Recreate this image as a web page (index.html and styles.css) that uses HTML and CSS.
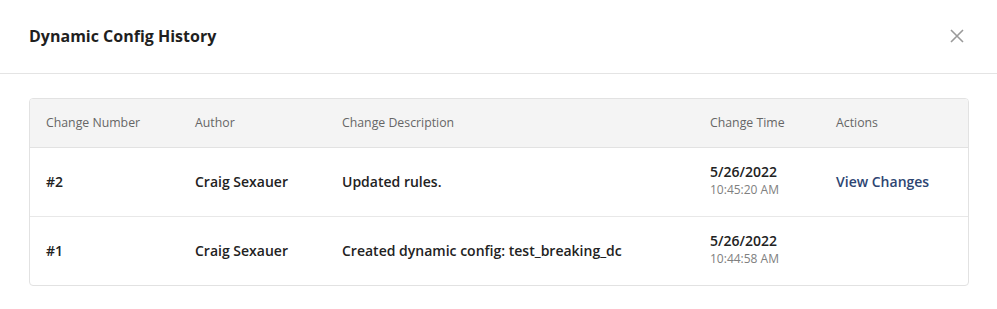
FILE: index.html
```html
<!DOCTYPE html>
<html lang="en">
<head>
  <meta charset="UTF-8" />
  <title>Dynamic Config History</title>
  <link rel="stylesheet" href="styles.css">
</head>
<body>
  <div class="modal">
    <div class="modal-header">
      <h2>Dynamic Config History</h2>
      <button class="modal-close" aria-label="Close">
        <svg width="14" height="14" viewBox="0 0 14 14"><path d="M1 1L13 13M13 1L1 13" stroke="#9a9a9a" stroke-width="1.6" fill="none"/></svg>
      </button>
    </div>

    <div class="modal-body">
      <div class="history-card">
        <table class="history-table">
          <thead>
            <tr>
              <th class="col-num">Change Number</th>
              <th class="col-author">Author</th>
              <th class="col-desc">Change Description</th>
              <th class="col-time">Change Time</th>
              <th>Actions</th>
            </tr>
          </thead>
          <tbody>
            <tr>
              <td>#2</td>
              <td>Craig Sexauer</td>
              <td>Updated rules.</td>
              <td>
                <div class="date">5/26/2022</div>
                <div class="time">10:45:20 AM</div>
              </td>
              <td><a href="#" class="view-link">View Changes</a></td>
            </tr>
            <tr>
              <td>#1</td>
              <td>Craig Sexauer</td>
              <td>Created dynamic config: test_breaking_dc</td>
              <td>
                <div class="date">5/26/2022</div>
                <div class="time">10:44:58 AM</div>
              </td>
              <td></td>
            </tr>
          </tbody>
        </table>
      </div>
    </div>
  </div>
</body>
</html>
```
FILE: styles.css
```css
* {
  box-sizing: border-box;
  margin: 0;
  padding: 0;
}

body {
  font-family: "Open Sans", sans-serif;
  background-color: #ffffff;
  color: #1f1f1f;
}

.modal {
  width: 997px;
}

.modal-header {
  height: 74px;
  display: flex;
  align-items: center;
  justify-content: space-between;
  padding: 0 30px 0 29px;
  border-bottom: 1px solid #e4e4e4;
}

.modal-header h2 {
  font-size: 16px;
  font-weight: 700;
  color: #1f1f1f;
  margin-top: -2px;
}

.modal-close {
  background: none;
  border: none;
  width: 20px;
  height: 20px;
  display: flex;
  align-items: center;
  justify-content: center;
  cursor: pointer;
  margin-top: -2px;
}

.modal-body {
  padding: 24px 28px 24px 29px;
}

.history-card {
  border: 1px solid #e2e2e2;
  border-radius: 4px;
  overflow: hidden;
}

.history-table {
  width: 100%;
  border-collapse: collapse;
}

.history-table th {
  background-color: #f4f4f4;
  height: 48px;
  text-align: left;
  font-size: 12.3px;
  font-weight: 400;
  color: #666666;
  padding: 0 16px 1px;
  border-bottom: 1px solid #e2e2e2;
}

.history-table td {
  height: 69px;
  padding: 0 16px 1px;
  font-size: 14px;
  font-weight: 550;
  color: #222222;
}

.history-table tbody tr + tr td {
  border-top: 1px solid #e8e8e8;
}

.col-num { width: 149px; }
.col-author { width: 147px; }
.col-desc { width: 368px; }
.col-time { width: 126px; }

.date {
  font-size: 14px;
  font-weight: 550;
  line-height: 19px;
  margin-top: -2px;
}

.time {
  font-size: 12px;
  font-weight: 400;
  color: #808080;
  line-height: 17px;
}

.view-link {
  color: #2d4572;
  text-decoration: none;
}
```
